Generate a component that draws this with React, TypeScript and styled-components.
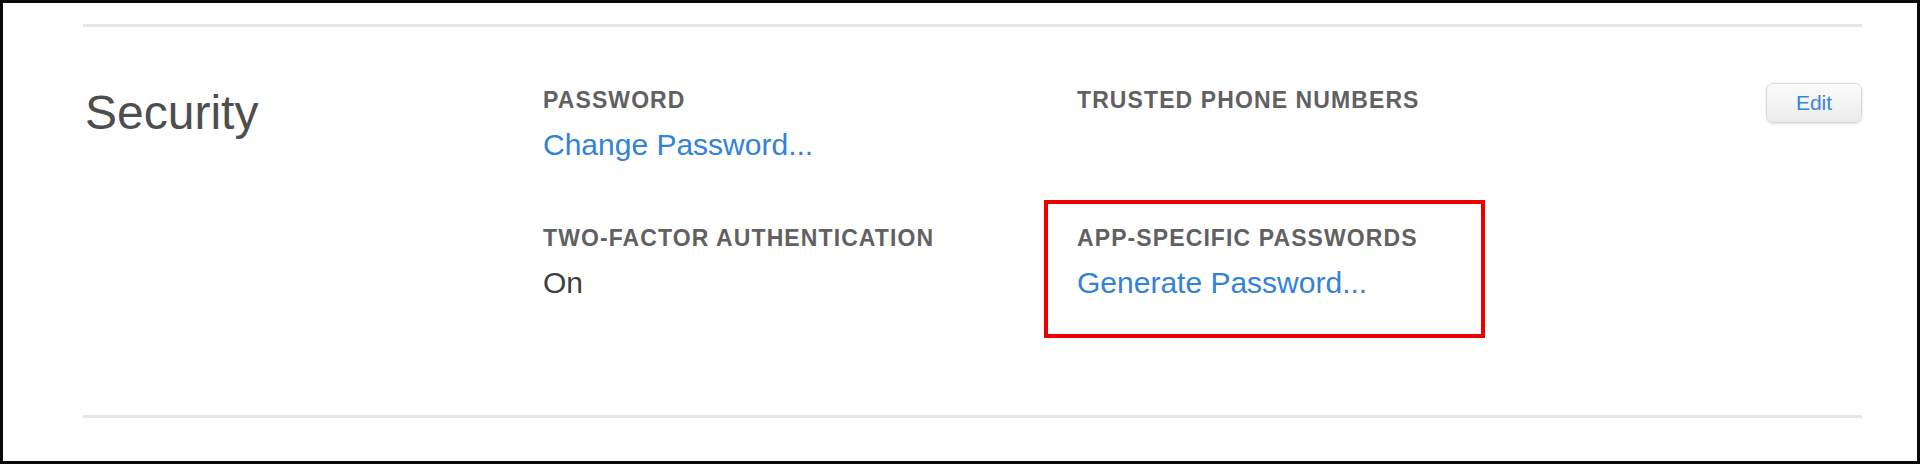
import React from 'react'
import styled, { createGlobalStyle } from 'styled-components'

const GlobalStyle = createGlobalStyle`
  html, body {
    margin: 0;
    padding: 0;
    background: #fff;
  }
  body {
    font-family: 'Liberation Sans', Arial, Helvetica, sans-serif;
  }
`

const fields = [
  { label: 'PASSWORD', value: 'Change Password...', link: true },
  { label: 'TRUSTED PHONE NUMBERS', value: '', link: false },
  { label: 'TWO-FACTOR AUTHENTICATION', value: 'On', link: false },
  { label: 'APP-SPECIFIC PASSWORDS', value: 'Generate Password...', link: true, marked: true },
]

const App = () => {
  return (
    <>
      <GlobalStyle />
      <Frame>
        <Rule />
        <Section>
          <Title>Security</Title>
          <Fields>
            {fields.map(f => (
              <Field key={f.label}>
                <Label>{f.label}</Label>
                {f.value && <Value $link={f.link}>{f.value}</Value>}
                {f.marked && <Marker />}
              </Field>
            ))}
          </Fields>
          <EditButton type="button">Edit</EditButton>
        </Section>
        <Rule />
      </Frame>
    </>
  )
}

const Frame = styled.div`
  box-sizing: border-box;
  width: 1920px;
  height: 464px;
  border: 3px solid #0a0a0a;
  padding: 21px 55px 0 80px;
  background: #fff;
`
const Rule = styled.div`
  height: 3px;
  background: #e6e6e6;
`
const Section = styled.div`
  display: flex;
  align-items: flex-start;
  padding: 58px 0 115px;
`
const Title = styled.h2`
  margin: 0;
  width: 460px;
  flex-shrink: 0;
  font-size: 48px;
  line-height: 56px;
  font-weight: 400;
  color: #4e4e4e;
  padding-left: 2px;
  box-sizing: border-box;
`
const Fields = styled.div`
  flex: 1;
  display: grid;
  grid-template-columns: 534px 1fr;
  row-gap: 63px;
  padding-top: 2px;
`
const Field = styled.div`
  position: relative;
  display: flex;
  flex-direction: column;
  gap: 15px;
`
const Label = styled.div`
  font-size: 23px;
  line-height: 26px;
  font-weight: 700;
  letter-spacing: 1.1px;
  color: #616161;
`
const Value = styled.div<{ $link?: boolean }>`
  font-size: 30px;
  line-height: 34px;
  color: ${p => (p.$link ? '#3182d8' : '#3e3e3e')};
  cursor: ${p => (p.$link ? 'pointer' : 'default')};
`
const Marker = styled.span`
  position: absolute;
  top: -25px;
  left: -33px;
  width: 441px;
  height: 138px;
  box-sizing: border-box;
  border: 4px solid #ee0000;
  pointer-events: none;
`
const EditButton = styled.button`
  flex-shrink: 0;
  margin-top: -2px;
  width: 96px;
  height: 40px;
  border: 1px solid #d9d9d9;
  border-radius: 7px;
  background: linear-gradient(#fbfbfb, #ececec);
  box-shadow: 0 1px 3px rgba(0, 0, 0, 0.12);
  font-family: 'Liberation Sans', Arial, sans-serif;
  font-size: 21px;
  color: #3a85d6;
  cursor: pointer;
`

export default App
